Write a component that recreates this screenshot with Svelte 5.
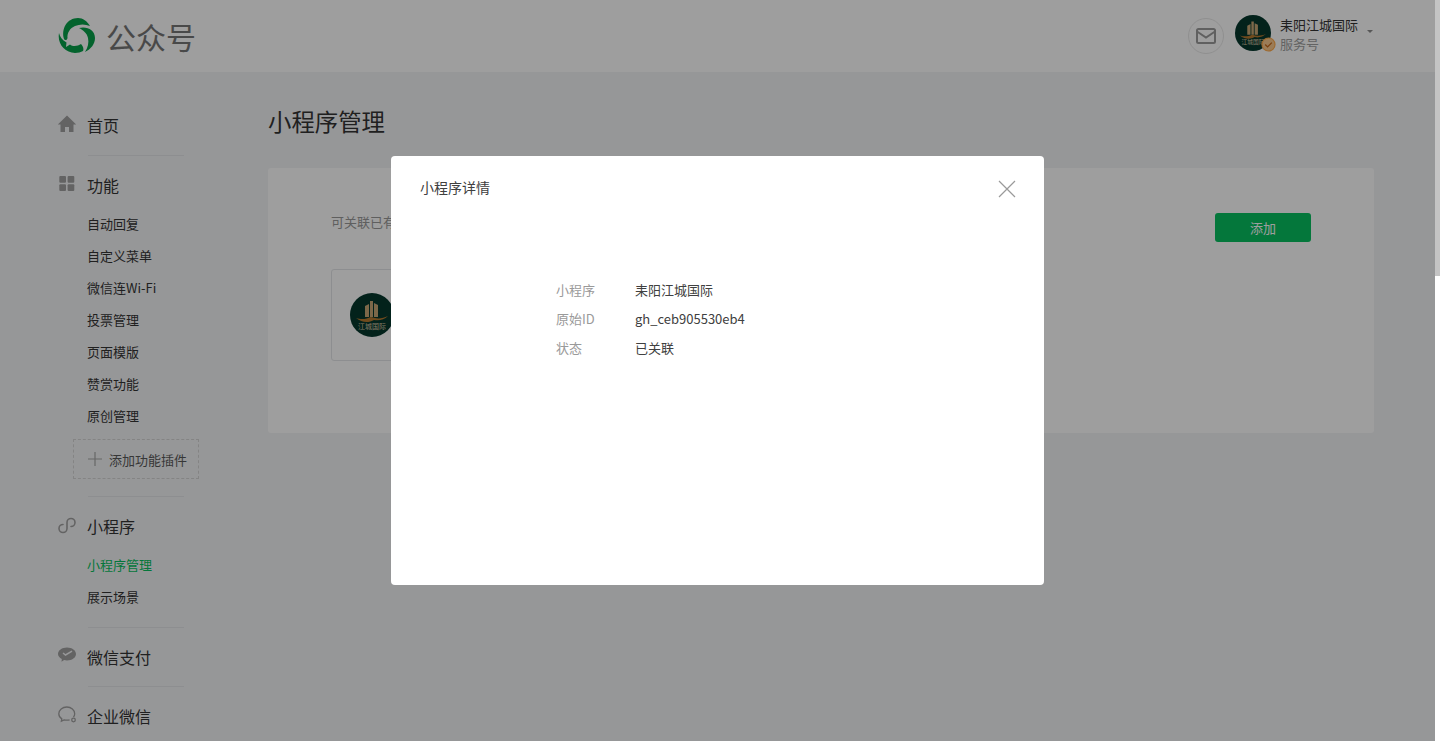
<script>
  const funcs = ['自动回复', '自定义菜单', '微信连Wi-Fi', '投票管理', '页面模版', '赞赏功能', '原创管理'];
  const details = [
    { label: '小程序', value: '耒阳江城国际' },
    { label: '原始ID', value: 'gh_ceb905530eb4' },
    { label: '状态', value: '已关联' }
  ];
</script>

{#snippet avatar(size)}
  <svg class="avatar" width={size} height={size} viewBox="0 0 44 44">
    <circle cx="22" cy="22" r="22" fill="#05372d" />
    <path d="M15 24V13l4-2v13zM20 24V8h3v16zM24 24V10l4 2v12z" fill="#c9a877" />
    <path d="M6 25c6 2 10 1 15-1 6 2 11 2 17-1-4 4-9 5-14 4-5 3-12 3-18-2z" fill="#b5792f" />
    <text x="22" y="36" text-anchor="middle" class="avatar-text">江城国际</text>
  </svg>
{/snippet}

<div class="page">
  <header class="header">
    <div class="brand">
      <svg width="38" height="38" viewBox="0 0 38 38">
        <g fill="#07a04a">
          <path d="M6 22C3 12 9 1 20 1c5 0 9 3 12 8-5-2-10-2-15 0-5 2-8 7-7.500 12-.2 1-.8 2-1.500 2-1 0-1.700-.3-2-1z" />
          <path d="M21 11c8-2 16 2 16 10 0 6-4 11-10 14 3-5 4-9 3-14-1-5-5-8-9-10z" />
          <path d="M1 16c-2 11 6 20 16 20 3 0 6-1 8-2 1-2 0-5-2-7-3 2-8 3-11 .5L8 30l.5-4.500C4 23 2 20 1 16z" />
        </g>
      </svg>
      <span class="brand-name">公众号</span>
    </div>
    <div class="account">
      <span class="mail">
        <svg width="20" height="16" viewBox="0 0 20 16" fill="none" stroke="#9b9b9b" stroke-width="2">
          <rect x="1" y="1" width="18" height="14" rx="1.500" />
          <path d="M1 3.500l9 6 9-6" />
        </svg>
      </span>
      <span class="account-avatar">
        {@render avatar(36)}
        <svg class="badge" width="15" height="15" viewBox="0 0 15 15">
          <circle cx="7.500" cy="7.500" r="6.500" fill="#fbc98d" stroke="#ffab4d" stroke-width="1.200" />
          <path d="M4.200 7.500l2.400 2.400 4.200-4.300" fill="none" stroke="#c4671a" stroke-width="1.300" />
        </svg>
      </span>
      <div class="account-text">
        <div class="account-name">耒阳江城国际</div>
        <div class="account-type">服务号</div>
      </div>
      <span class="caret"></span>
    </div>
  </header>

  <div class="body">
    <aside class="sidebar">
      <div class="nav-group">
        <div class="nav-title">
          <svg class="nav-icon" width="20" height="20" viewBox="0 0 20 20" fill="#a0a0a0">
            <path d="M10 1.500L.8 10.500h2.700V18h4.500v-5h4v5h4.500V10.500h2.700z" />
          </svg>
          首页
        </div>
      </div>

      <div class="nav-group has-plugin">
        <div class="nav-title">
          <svg class="nav-icon" width="20" height="20" viewBox="0 0 20 20" fill="#a0a0a0">
            <rect x="2.300" y="2" width="6.700" height="6.700" rx="1" />
            <rect x="10.600" y="2" width="6.700" height="6.700" rx="1" />
            <rect x="2.300" y="10.300" width="6.700" height="6.700" rx="1" />
            <rect x="10.600" y="10.300" width="6.700" height="6.700" rx="1" />
          </svg>
          功能
        </div>
        <ul class="sub-list">
          {#each funcs as item}
            <li>{item}</li>
          {/each}
        </ul>
        <div class="add-plugin">
          <svg width="16" height="16" viewBox="0 0 16 16" stroke="#a6a6a6" stroke-width="1.200">
            <path d="M8 1v14M1 8h14" />
          </svg>
          添加功能插件
        </div>
      </div>

      <div class="nav-group has-list">
        <div class="nav-title">
          <svg class="nav-icon" width="20" height="20" viewBox="0 0 20 20" fill="none" stroke="#a0a0a0" stroke-width="1.600">
            <path d="M10 7.500v6a4 4 0 1 1-4-4M10 7.500a4 4 0 1 1 4 4" stroke-linecap="round" />
          </svg>
          小程序
        </div>
        <ul class="sub-list">
          <li class="current">小程序管理</li>
          <li>展示场景</li>
        </ul>
      </div>

      <div class="nav-group tight">
        <div class="nav-title">
          <svg class="nav-icon" width="20" height="20" viewBox="0 0 20 20">
            <path d="M10 1.500c5 0 9 2.900 9 6.500s-4 6.500-9 6.500c-1 0-2-.1-2.900-.4L4.500 15.800l.3-2.900C2.500 11.700 1 10 1 8c0-3.600 4-6.500 9-6.500z" fill="#a0a0a0" />
            <path d="M6 7l2.500 2L15 5.200" fill="none" stroke="#f3f4f6" stroke-width="1.500" />
          </svg>
          微信支付
        </div>
      </div>

      <div class="nav-group last">
        <div class="nav-title">
          <svg class="nav-icon" width="22" height="20" viewBox="0 0 22 20" fill="none" stroke="#a0a0a0" stroke-width="1.300">
            <path d="M16.500 12c.8-1 1.200-2.100 1.200-3.300C17.700 5 14.200 2 9.800 2S1.800 5 1.800 8.700c0 2.100 1.200 4 3 5.200l-.4 2.300 2.700-1.300c.9.200 1.800.3 2.700.3 1 0 2-.1 2.800-.4" />
            <circle cx="16.500" cy="15" r="1.800" />
          </svg>
          企业微信
        </div>
      </div>
    </aside>

    <main class="main">
      <h1>小程序管理</h1>
      <section class="card">
        <div class="card-head">
          <p>可关联已有的小程序或快速注册小程序</p>
          <button class="add-btn">添加</button>
        </div>
        <div class="app-item">
          {@render avatar(44)}
          <span>耒阳江城国际</span>
        </div>
      </section>
    </main>
  </div>
</div>

<div class="mask">
  <div class="dialog">
    <div class="dialog-head">
      <span>小程序详情</span>
      <svg width="18" height="18" viewBox="0 0 18 18" stroke="#9a9a9a" stroke-width="1.200">
        <path d="M1 1l16 16M17 1L1 17" />
      </svg>
    </div>
    <dl class="detail">
      {#each details as row}
        <dt>{row.label}</dt>
        <dd>{row.value}</dd>
      {/each}
    </dl>
  </div>
</div>

<div class="scroll-thumb"></div>

<style>
  :global(html), :global(body) {
    margin: 0;
    height: 741px;
    overflow: hidden;
    background: #fff;
  }

  .page {
    width: 1435px;
    height: 741px;
    overflow: hidden;
    background: #f3f4f6;
    color: #353535;
    font-family: "Noto Sans CJK SC", "Noto Sans", sans-serif;
  }

  .header {
    height: 72px;
    background: #fff;
    display: flex;
    justify-content: space-between;
    align-items: center;
    padding: 0 62px 0 58px;
  }

  .brand {
    display: flex;
    align-items: center;
    gap: 10px;
  }

  .brand-name {
    font-size: 30px;
    line-height: 38px;
    color: #777;
  }

  .account {
    display: flex;
    align-items: center;
    position: relative;
  }

  .mail {
    width: 34px;
    height: 34px;
    border: 1px solid #e8e8e8;
    border-radius: 50%;
    display: flex;
    align-items: center;
    justify-content: center;
    margin-right: 11px;
  }

  .account-avatar {
    position: relative;
    width: 36px;
    height: 36px;
    margin: -6px 9px 0 0;
  }

  .avatar {
    display: block;
  }

  .avatar-text {
    font-size: 7px;
    fill: #d8c6a5;
  }

  .badge {
    position: absolute;
    right: -5px;
    bottom: -1px;
  }

  .account-text {
    font-size: 13px;
    line-height: 19px;
    margin-top: -5px;
  }

  .account-name {
    color: #353535;
  }

  .account-type {
    color: #a0a0a0;
  }

  .caret {
    width: 0;
    height: 0;
    margin: -10px 0 0 9px;
    border: 3px solid transparent;
    border-top-color: #8d8d8d;
    border-bottom: 0;
  }

  .body {
    display: flex;
    padding-top: 33px;
  }

  .sidebar {
    width: 210px;
    flex: none;
  }

  .nav-group {
    padding-bottom: 11px;
    position: relative;
    margin-bottom: 9px;
  }

  .has-plugin {
    padding-bottom: 18px;
  }

  .has-list {
    padding-bottom: 15px;
  }

  .tight {
    padding-bottom: 10px;
  }

  .nav-group::after {
    content: "";
    position: absolute;
    left: 88px;
    bottom: 0;
    width: 96px;
    height: 1px;
    background: #e4e6e9;
  }

  .last::after {
    display: none;
  }

  .nav-title {
    display: flex;
    align-items: center;
    padding-left: 87px;
    height: 40px;
    font-size: 16px;
    line-height: 40px;
    position: relative;
  }

  .nav-icon {
    position: absolute;
    left: 57px;
    top: 9px;
  }

  .sub-list {
    list-style: none;
    margin: 3px 0 0;
    padding: 0 0 0 87px;
    font-size: 13px;
    line-height: 32px;
  }

  .current {
    color: #07c160;
  }

  .add-plugin {
    margin: 7px 0 0 73px;
    width: 124px;
    height: 38px;
    border: 1px dashed #d5d5d5;
    display: flex;
    align-items: center;
    gap: 6px;
    font-size: 13px;
    color: #5a5a5a;
  }

  .add-plugin svg {
    margin-left: 13px;
  }

  .main {
    flex: 1;
    padding: 0 61px 0 58px;
    min-width: 0;
  }

  h1 {
    margin: 0 0 31px;
    font-size: 23.400px;
    font-weight: 400;
    line-height: 32px;
  }

  .card {
    height: 265px;
    background: #fff;
    border-radius: 3px;
    box-sizing: border-box;
    padding: 45px 63px 0;
  }

  .card-head {
    display: flex;
    justify-content: space-between;
    align-items: flex-start;
    margin-bottom: 27px;
  }

  .card-head p {
    margin: 0;
    font-size: 13px;
    line-height: 18px;
    color: #999;
  }

  .add-btn {
    width: 96px;
    height: 29px;
    border: 0;
    border-radius: 3px;
    background: #07c160;
    color: #fff;
    font: inherit;
    font-size: 13px;
  }

  .app-item {
    width: 300px;
    height: 90px;
    border: 1px solid #e4e6e9;
    border-radius: 3px;
    display: flex;
    align-items: center;
    gap: 14px;
    padding-left: 18px;
    font-size: 14px;
  }

  .mask {
    position: fixed;
    left: 0;
    top: 0;
    width: 1435px;
    height: 741px;
    background: rgba(0, 0, 0, 0.38);
    display: flex;
    align-items: center;
    justify-content: center;
  }

  .dialog {
    width: 653px;
    height: 429px;
    background: #fff;
    border-radius: 4px;
    box-sizing: border-box;
    padding: 21px 28px 0 29px;
    color: #404040;
    font-family: "Noto Sans CJK SC", "Noto Sans", sans-serif;
  }

  .dialog-head {
    display: flex;
    justify-content: space-between;
    align-items: flex-start;
    font-size: 14px;
    line-height: 20px;
  }

  .dialog-head svg {
    margin-top: 3px;
  }

  .detail {
    margin: 82px 0 0 136px;
    display: grid;
    grid-template-columns: 79px 1fr;
    grid-auto-rows: 29px;
    font-size: 13px;
    line-height: 20px;
  }

  .detail dt {
    color: #9a9a9a;
  }

  .detail dd {
    margin: 0;
  }

  .scroll-thumb {
    position: fixed;
    right: 0;
    top: 0;
    width: 5px;
    height: 276px;
    background: #c4c4c4;
  }
</style>
